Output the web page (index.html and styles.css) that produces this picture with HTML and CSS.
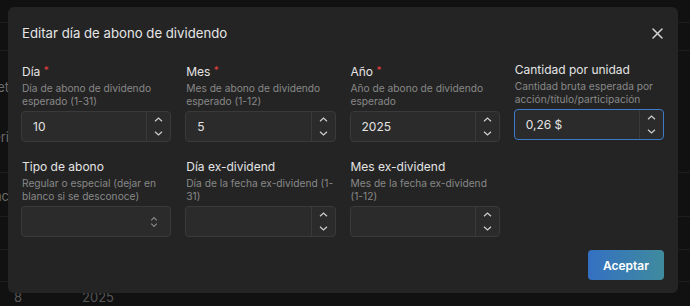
FILE: index.html
```html
<!DOCTYPE html>
<html lang="es">
<head>
<meta charset="utf-8">
<title>Editar día de abono de dividendo</title>
<link rel="stylesheet" href="styles.css">
</head>
<body>
<div class="page">
  <div class="bg-row r1"><span class="c1"></span></div>
  <div class="bg-row r2"><span class="c1"></span></div>
  <div class="bg-row r3">
    <span class="c1 t1">Fecha de ret</span>
    <span class="c1 t2">Peri</span>
  </div>
  <div class="bg-row r4"><span class="c1 t3">Banc</span></div>
  <div class="bg-row r5"><span class="c1"></span></div>
  <div class="bg-row r6"><span class="c1"></span></div>
  <div class="bg-row r7"><span class="n1">8</span><span class="n2">2025</span></div>
</div>

<div class="modal" role="dialog">
  <div class="modal-head">
    <h2 class="modal-title">Editar día de abono de dividendo</h2>
    <button class="close" aria-label="Cerrar">
      <svg width="11" height="11" viewBox="0 0 11 11"><path d="M1 1L10 10M10 1L1 10" stroke="#d4d4d4" stroke-width="1.5" stroke-linecap="round"/></svg>
    </button>
  </div>
  <div class="form-grid">
    <div class="field">
      <div class="label">Día <span class="req">*</span></div>
      <div class="desc">Día de abono de dividendo esperado (1-31)</div>
      <div class="input">
        <span class="val">10</span>
        <span class="spin"><span><svg width="9" height="5" viewBox="0 0 9 5"><path d="M1 4.2L4.5 1L8 4.2" fill="none" stroke="#cfcfcf" stroke-width="1.2"/></svg></span><span><svg width="9" height="5" viewBox="0 0 9 5"><path d="M1 0.8L4.5 4L8 0.8" fill="none" stroke="#cfcfcf" stroke-width="1.2"/></svg></span></span>
      </div>
    </div>
    <div class="field">
      <div class="label">Mes <span class="req">*</span></div>
      <div class="desc">Mes de abono de dividendo esperado (1-12)</div>
      <div class="input">
        <span class="val">5</span>
        <span class="spin"><span><svg width="9" height="5" viewBox="0 0 9 5"><path d="M1 4.2L4.5 1L8 4.2" fill="none" stroke="#cfcfcf" stroke-width="1.2"/></svg></span><span><svg width="9" height="5" viewBox="0 0 9 5"><path d="M1 0.8L4.5 4L8 0.8" fill="none" stroke="#cfcfcf" stroke-width="1.2"/></svg></span></span>
      </div>
    </div>
    <div class="field">
      <div class="label">Año <span class="req">*</span></div>
      <div class="desc">Año de abono de dividendo esperado</div>
      <div class="input">
        <span class="val">2025</span>
        <span class="spin"><span><svg width="9" height="5" viewBox="0 0 9 5"><path d="M1 4.2L4.5 1L8 4.2" fill="none" stroke="#cfcfcf" stroke-width="1.2"/></svg></span><span><svg width="9" height="5" viewBox="0 0 9 5"><path d="M1 0.8L4.5 4L8 0.8" fill="none" stroke="#cfcfcf" stroke-width="1.2"/></svg></span></span>
      </div>
    </div>
    <div class="field">
      <div class="label">Cantidad por unidad</div>
      <div class="desc">Cantidad bruta esperada por acción/título/participación</div>
      <div class="input focus">
        <span class="val">0,26 $</span>
        <span class="spin"><span><svg width="9" height="5" viewBox="0 0 9 5"><path d="M1 4.2L4.5 1L8 4.2" fill="none" stroke="#cfcfcf" stroke-width="1.2"/></svg></span><span><svg width="9" height="5" viewBox="0 0 9 5"><path d="M1 0.8L4.5 4L8 0.8" fill="none" stroke="#cfcfcf" stroke-width="1.2"/></svg></span></span>
      </div>
    </div>

    <div class="field">
      <div class="label">Tipo de abono</div>
      <div class="desc">Regular o especial (dejar en blanco si se desconoce)</div>
      <div class="input select">
        <span class="val"></span>
        <svg class="sel-ico" width="8" height="12" viewBox="0 0 8 12"><path d="M1.2 4.4L4 1.6L6.8 4.4M1.2 7.6L4 10.4L6.8 7.6" fill="none" stroke="#8a8a8a" stroke-width="1.1"/></svg>
      </div>
    </div>
    <div class="field">
      <div class="label">Día ex-dividend</div>
      <div class="desc">Día de la fecha ex-dividend (1-<wbr>31)</div>
      <div class="input">
        <span class="val"></span>
        <span class="spin"><span><svg width="9" height="5" viewBox="0 0 9 5"><path d="M1 4.2L4.5 1L8 4.2" fill="none" stroke="#cfcfcf" stroke-width="1.2"/></svg></span><span><svg width="9" height="5" viewBox="0 0 9 5"><path d="M1 0.8L4.5 4L8 0.8" fill="none" stroke="#cfcfcf" stroke-width="1.2"/></svg></span></span>
      </div>
    </div>
    <div class="field">
      <div class="label">Mes ex-dividend</div>
      <div class="desc">Mes de la fecha ex-dividend (1-12)</div>
      <div class="input">
        <span class="val"></span>
        <span class="spin"><span><svg width="9" height="5" viewBox="0 0 9 5"><path d="M1 4.2L4.5 1L8 4.2" fill="none" stroke="#cfcfcf" stroke-width="1.2"/></svg></span><span><svg width="9" height="5" viewBox="0 0 9 5"><path d="M1 0.8L4.5 4L8 0.8" fill="none" stroke="#cfcfcf" stroke-width="1.2"/></svg></span></span>
      </div>
    </div>
  </div>
  <div class="modal-foot">
    <button class="btn">Aceptar</button>
  </div>
</div>
</body>
</html>
```

FILE: styles.css
```css
* { box-sizing: border-box; }
html, body { margin: 0; padding: 0; }
body {
  background: #111111;
  font-family: Inter, "Noto Sans", "Liberation Sans", sans-serif;
  width: 690px;
  height: 306px;
  overflow: hidden;
  position: relative;
}

/* background page (dimmed by backdrop) */
.page { display: flex; flex-direction: column; }
.bg-row {
  border-bottom: 1px solid #1d1d1d;
  position: relative;
  color: #6b6b6b;
  font-size: 13px;
}
.bg-row .c1 {
  display: flex;
  justify-content: flex-end;
  width: 9px;
  overflow: hidden;
  white-space: nowrap;
}
.r1 { height: 23px; }
.r2 { height: 28px; }
.r3 { height: 122px; padding-top: 28px; }
.r3 .t2 { margin-top: 34px; }
.r4 { height: 44px; padding-top: 15px; }
.r5 { height: 33px; }
.r6 { height: 32px; }
.r7 { border-bottom: 0; display: flex; padding-top: 7px; color: #555; }
.r7 .n1 { margin-left: 14px; }
.r7 .n2 { margin-left: 60px; }

/* modal */
.modal {
  position: absolute;
  left: 8px;
  top: 7px;
  width: 670px;
  height: 286px;
  background: #242424;
  border-radius: 6px;
  padding: 16px 14px 13px 13px;
  display: flex;
  flex-direction: column;
}
.modal-head {
  display: flex;
  align-items: center;
  justify-content: space-between;
  height: 20px;
}
.modal-title {
  margin: 0 0 0 1px;
  font-size: 13.2px;
  font-weight: 400;
  color: #e6e6e6;
  line-height: 20px;
}
.close {
  background: none;
  border: 0;
  padding: 0;
  width: 20px;
  height: 20px;
  display: flex;
  align-items: center;
  justify-content: center;
  margin-right: -3px;
}

.form-grid {
  margin-top: 18px;
  display: grid;
  grid-template-columns: repeat(4, 1fr);
  column-gap: 14px;
  row-gap: 16px;
}
.field { display: flex; flex-direction: column; }
.label {
  font-size: 12px;
  line-height: 18px;
  color: #e4e4e4;
  margin-left: 1px;
}
.req { color: #e0413b; font-size: 10px; vertical-align: 2px; }
.desc {
  font-size: 10.2px;
  line-height: 13px;
  color: #888888;
  margin: 1px 0 0 1px;
  height: 26px;
}
.input {
  margin-top: 3px;
  height: 31px;
  background: #2b2b2b;
  border: 1px solid #3a3a3a;
  border-radius: 4px;
  display: flex;
  align-items: stretch;
}
.input.focus { border-color: #3b7ac6; }
.val {
  flex: 1;
  display: flex;
  align-items: center;
  padding-left: 11px;
  font-size: 12px;
  color: #e2e2e2;
}
.spin {
  width: 24px;
  border-left: 1px solid #3a3a3a;
  display: flex;
  flex-direction: column;
}
.spin span {
  flex: 1;
  display: flex;
  align-items: center;
  justify-content: center;
}
.select { align-items: center; }
.sel-ico { margin-right: 12px; }

.modal-foot {
  margin-top: auto;
  display: flex;
  justify-content: flex-end;
}
.btn {
  width: 76px;
  height: 30px;
  border: 0;
  border-radius: 4px;
  background: linear-gradient(90deg, #3470c2, #3f8b9e);
  color: #ffffff;
  font-family: Inter, "Noto Sans", sans-serif;
  font-size: 12px;
  font-weight: 600;
}
```
